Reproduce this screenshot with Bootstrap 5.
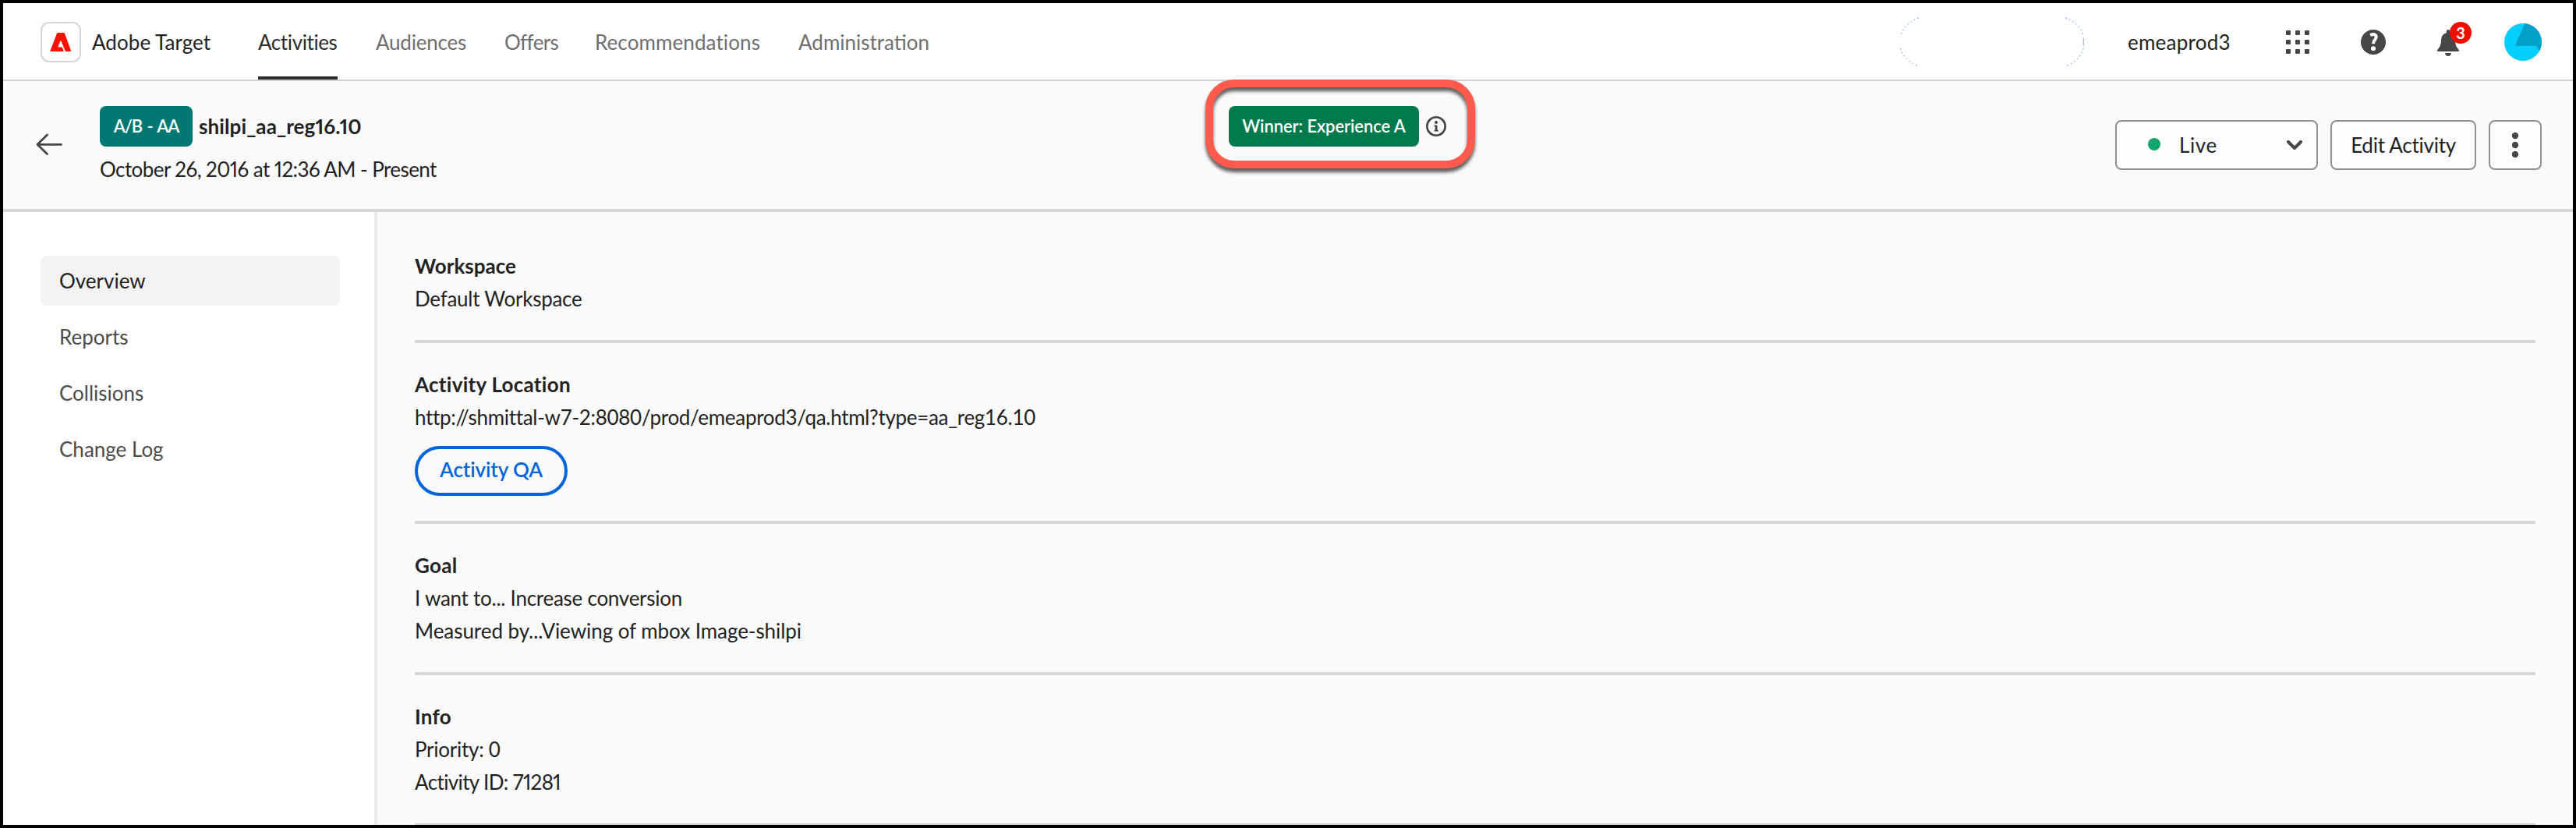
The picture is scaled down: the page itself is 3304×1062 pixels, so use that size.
<!DOCTYPE html>
<html lang="en">
<head>
<meta charset="utf-8">
<title>Adobe Target</title>
<link href="https://cdn.jsdelivr.net/npm/bootstrap@5.3.0/dist/css/bootstrap.min.css" rel="stylesheet">
<script src="https://cdn.jsdelivr.net/npm/bootstrap@5.3.0/dist/js/bootstrap.bundle.min.js"></script>
<style>
body{font-family:Lato,"Open Sans",sans-serif;font-size:26px;line-height:42px;color:#222;background:#fafafa;margin:0}
.frame{width:3304px;height:1062px;border:4px solid #000;background:#fafafa}
.topbar{height:100px;padding:2px 40px 0 48px;background:#fff;border-bottom:2px solid #d0d0d0;white-space:nowrap}
.logo{width:52px;height:52px;border:2px solid #d5d5d5;border-radius:11px;margin-right:14px}
.product{width:213px;letter-spacing:.05px}
.tabs{gap:49px}
.tabs .nav-link{padding:0;height:96px;line-height:96px;color:#6e6e6e}
.tabs .nav-link.active{color:#2c2c2c;box-shadow:inset 0 -4px 0 #2c2c2c;letter-spacing:-.4px}
.w-act{width:102px}.w-aud{width:116px;letter-spacing:-.21px}.w-off{width:67px;letter-spacing:-.6px}
.w-rec{width:212px;letter-spacing:.1px}.w-adm{width:168px}
.org{width:131px;margin:0 72px 0 56px;letter-spacing:.24px}
.gap-icon{margin-right:66px}
.alerts{width:44px;height:46px;margin-right:42px}
.alert-count{left:16px;top:-3px;width:28px;height:28px;border-radius:50%;background:#eb1000;color:#fff;font-size:20px;font-weight:700;line-height:28px;text-align:center}
.subbar{height:168px;padding:0 40px 0 42px;border-bottom:4px solid #d5d5d5;white-space:nowrap}
.heading{width:480px;height:100px;margin-left:48px}
.tag{height:52px;border-radius:8px;color:#fff;font-size:22px;font-weight:600;line-height:52px;text-align:center}
.tag-type{width:119px;background:#007772;letter-spacing:-1.1px;word-spacing:2px;margin-right:8px}
.tag-win{width:244px;background:#007a4d;letter-spacing:-.1px;margin-right:9px}
.title{font-weight:700;line-height:52px;font-variant-numeric:proportional-nums;letter-spacing:.1px}
.dates{margin-top:8px;font-variant-numeric:proportional-nums;letter-spacing:-.57px}
.winner{margin:32px 0 0 968px}
.callout{left:-30px;top:-34px;width:346px;height:114px;border:10px solid #ff5a4c;border-radius:37px;filter:drop-shadow(0 5px 2px rgba(0,0,0,.62));z-index:2}
.ctl{height:64px;border:2px solid #909090;border-radius:8px;background:#fdfdfd;color:#222;font-size:26px;line-height:60px;padding:0}
.ctl-live{width:260px;padding:0 18px 0 40px;margin-right:16px}
.ctl-edit{width:187px;letter-spacing:-.25px;margin-right:16px}
.ctl-more{width:68px}
.dot{width:16px;height:16px;border-radius:50%;background:#12a36e;margin:-2px 24px 0 0}
.live{letter-spacing:.6px}
.side{width:480px;height:786px;padding:56px 44px 0 48px;background:#fff;border-right:4px solid #eaeaea}
.side .nav-link{height:64px;line-height:64px;padding:0 24px;border-radius:8px;margin-bottom:8px;color:#4b4b4b}
.side .nav-link.active{background:#f3f3f3;color:#222}
.detail{height:786px;padding:16px 48px 0 48px;overflow:hidden}
.block{padding:32px 0;border-bottom:4px solid #d5d5d5}
.block h2{font-size:26px;font-weight:700;line-height:42px;margin:0;letter-spacing:0}
.block h2.loose{letter-spacing:.28px}
.block p{margin:0;letter-spacing:-.26px}
.block .url{letter-spacing:-.31px}
.block .near{letter-spacing:-.06px}
.block .num{font-variant-numeric:proportional-nums;letter-spacing:-.62px}
.qa{width:196px;height:64px;margin-top:16px;padding:0 0 4px;border:4px solid #0265dc;border-radius:32px;color:#0265dc;font-size:26px;font-weight:600;line-height:52px;letter-spacing:-.1px}
</style>
</head>
<body>
<div class="frame d-flex flex-column overflow-hidden">
  <header class="topbar d-flex align-items-center flex-shrink-0">
    <div class="logo d-flex align-items-center justify-content-center flex-shrink-0">
      <svg width="28" height="24" viewBox="0 0 28 24"><path d="M10.2 0h7.6q.9 0 1.200.8L27 23q.3 1-.7 1h-5.500q-.8 0-1.100-.8L14.200 10.300q-.3-.7-.6 0L10.500 17.600q-.3.800.5.800h3.700q.8 0 1.100.7l1.700 4q.3.900-.6.900H1.200q-1 0-.7-1L9 .8Q9.300 0 10.200 0z" fill="#fa0f00"/></svg>
    </div>
    <div class="product">Adobe Target</div>
    <nav class="nav tabs flex-nowrap">
      <a class="nav-link active w-act">Activities</a>
      <a class="nav-link w-aud">Audiences</a>
      <a class="nav-link w-off">Offers</a>
      <a class="nav-link w-rec">Recommendations</a>
      <a class="nav-link w-adm">Administration</a>
    </nav>
    <svg class="ms-auto" width="236" height="64" viewBox="0 0 236 64" fill="none" stroke="#2f7be8" stroke-width="1" stroke-dasharray="1.500 3.500"><path d="M24 1Q5 8 .7 24M.7 40Q5 56 24 63M212 1Q231 8 235.300 24M235.300 40Q231 56 212 63"/><path d="M235.300 27v10" stroke-dasharray="none" stroke-opacity=".6"/></svg>
    <div class="org">emeaprod3</div>
    <svg class="gap-icon" width="30" height="30" viewBox="0 0 30 30" fill="#464646"><rect width="6" height="6" rx="1"/><rect x="12" width="6" height="6" rx="1"/><rect x="24" width="6" height="6" rx="1"/><rect y="12" width="6" height="6" rx="1"/><rect x="12" y="12" width="6" height="6" rx="1"/><rect x="24" y="12" width="6" height="6" rx="1"/><rect y="24" width="6" height="6" rx="1"/><rect x="12" y="24" width="6" height="6" rx="1"/><rect x="24" y="24" width="6" height="6" rx="1"/></svg>
    <svg class="gap-icon" width="32" height="32" viewBox="0 0 32 32"><circle cx="16" cy="16" r="16" fill="#464646"/><path d="M12.200 7.200Q16.800 4.800 19 7.200Q20.700 9.600 18.400 12.600Q16 15 16.100 18.200" fill="none" stroke="#fff" stroke-width="4"/><circle cx="16" cy="24.200" r="3" fill="#fff"/></svg>
    <div class="alerts position-relative">
      <svg width="44" height="46" viewBox="0 0 44 46" class="d-block" fill="#464646"><path d="M11.800 9q0-2 2.200-2t2.200 2v2.200q6 1.400 6.600 8c.4 7 1.200 9 4.200 12.800q1 1.200 1 3H0q0-1.800 1-3c3-3.800 3.800-5.800 4.200-12.800q.6-6.600 6.600-8zM10 37h8q-.6 4-4 4t-4-4z"/></svg>
      <span class="alert-count position-absolute">3</span>
    </div>
    <svg width="48" height="48" viewBox="0 0 48 48"><circle cx="24" cy="24" r="24" fill="#04cfff"/><path d="M26.300.1A24 24 0 0 1 44.900 35.700L41.500 29H13.500z" fill="#00a0c8"/></svg>
  </header>

  <section class="subbar d-flex align-items-center flex-shrink-0">
    <svg width="34" height="32" viewBox="0 0 34 32" fill="none" stroke="#464646" stroke-width="2.800" stroke-linecap="round" stroke-linejoin="round"><path d="M32.500 15.300H2M14.500 3L2 15.300l12.500 12.200"/></svg>
    <div class="heading">
      <div class="d-flex">
        <span class="tag tag-type">A/B - AA</span>
        <span class="title">shilpi_aa_reg16.10</span>
      </div>
      <div class="dates">October 26, 2016 at 12:36 AM - Present</div>
    </div>
    <div class="winner d-flex align-items-center align-self-start position-relative">
      <span class="tag tag-win">Winner: Experience A</span>
      <svg width="26" height="26" viewBox="0 0 26 26"><circle cx="13" cy="13" r="11.700" fill="none" stroke="#464646" stroke-width="2.600"/><circle cx="13" cy="8" r="2" fill="#464646"/><path d="M10.500 11.500h4v6.200h1.300v1.700h-5.300v-1.700h1.200v-4.500h-1.200z" fill="#464646"/></svg>
      <div class="callout position-absolute"></div>
    </div>
    <button class="btn ctl ctl-live ms-auto d-flex align-items-center">
      <span class="dot"></span><span class="live">Live</span>
      <svg class="ms-auto" width="20" height="12" viewBox="0 0 20 12" fill="none" stroke="#464646" stroke-width="4" stroke-linecap="round" stroke-linejoin="round"><path d="M2 2l8 8 8-8"/></svg>
    </button>
    <button class="btn ctl ctl-edit">Edit Activity</button>
    <button class="btn ctl ctl-more d-flex align-items-center justify-content-center">
      <svg width="10" height="34" viewBox="0 0 10 34" fill="#464646"><circle cx="5" cy="5" r="4.200"/><circle cx="5" cy="17" r="4.200"/><circle cx="5" cy="29" r="4.200"/></svg>
    </button>
  </section>

  <div class="d-flex">
    <nav class="side nav flex-column flex-nowrap flex-shrink-0">
      <a class="nav-link active">Overview</a>
      <a class="nav-link">Reports</a>
      <a class="nav-link">Collisions</a>
      <a class="nav-link">Change Log</a>
    </nav>
    <main class="detail flex-grow-1">
      <section class="block">
        <h2>Workspace</h2>
        <p>Default Workspace</p>
      </section>
      <section class="block">
        <h2 class="loose">Activity Location</h2>
        <p class="url">http://shmittal-w7-2:8080/prod/emeaprod3/qa.html?type=aa_reg16.10</p>
        <button class="btn qa d-block">Activity QA</button>
      </section>
      <section class="block">
        <h2 class="loose">Goal</h2>
        <p>I want to... Increase conversion</p>
        <p class="near">Measured by...Viewing of mbox Image-shilpi</p>
      </section>
      <section class="block">
        <h2 class="loose">Info</h2>
        <p>Priority: 0</p>
        <p class="num">Activity ID: 71281</p>
      </section>
    </main>
  </div>
</div>
</body>
</html>
